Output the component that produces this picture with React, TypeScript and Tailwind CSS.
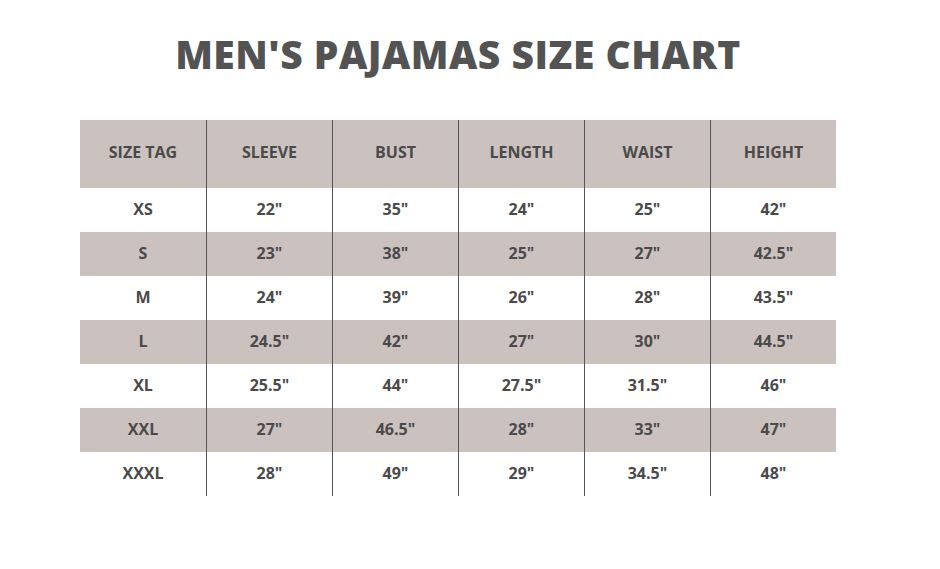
import React from "react";

const headers = ["SIZE TAG", "SLEEVE", "BUST", "LENGTH", "WAIST", "HEIGHT"];
const rows = [
  ["XS", '22"', '35"', '24"', '25"', '42"'],
  ["S", '23"', '38"', '25"', '27"', '42.5"'],
  ["M", '24"', '39"', '26"', '28"', '43.5"'],
  ["L", '24.5"', '42"', '27"', '30"', '44.5"'],
  ["XL", '25.5"', '44"', '27.5"', '31.5"', '46"'],
  ["XXL", '27"', '46.5"', '28"', '33"', '47"'],
  ["XXXL", '28"', '49"', '29"', '34.5"', '48"'],
];

export default function App() {
  return (
    <div
      className="w-[940px] h-[569px] bg-white flex flex-col"
      style={{ fontFamily: '"Open Sans", "Liberation Sans", sans-serif' }}
    >
      <div className="w-[756px] ml-[80px] flex justify-center pt-[29px] h-[120px]">
        <h1 className="text-[39px] leading-[50px] font-extrabold text-[#535353] tracking-[0.5px]">
          MEN'S PAJAMAS SIZE CHART
        </h1>
      </div>
      <div className="ml-[80px] w-[756px] flex flex-col text-[#4a4a4a] font-bold text-[16px]">
        <div className="grid grid-cols-6 h-[68px] bg-[#cbc2c0]">
          {headers.map((h, i) => (
            <div
              key={h}
              className={`flex items-center justify-center pb-[4px] ${i > 0 ? "border-l border-[#555]" : ""}`}
            >
              {h}
            </div>
          ))}
        </div>
        {rows.map((r, ri) => (
          <div
            key={r[0]}
            className={`grid grid-cols-6 h-[44px] ${ri % 2 === 1 ? "bg-[#cbc2c0]" : "bg-white"}`}
          >
            {r.map((c, i) => (
              <div
                key={i}
                className={`flex items-center justify-center pb-[2px] ${i > 0 ? "border-l border-[#555]" : ""}`}
              >
                {c}
              </div>
            ))}
          </div>
        ))}
      </div>
    </div>
  );
}
